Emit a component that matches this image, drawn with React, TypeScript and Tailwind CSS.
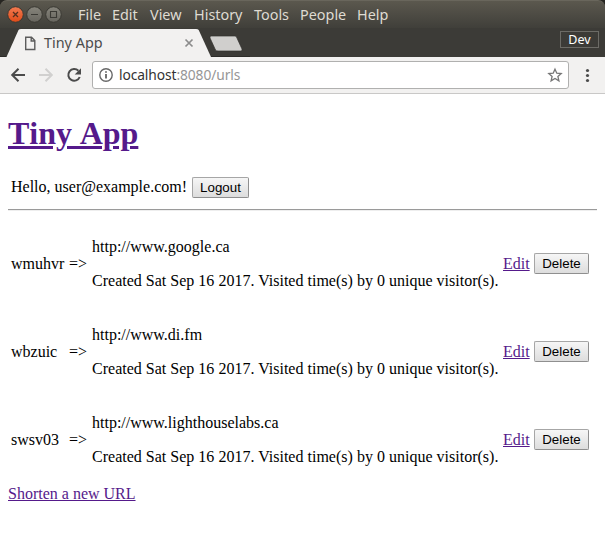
const menu = [
  { label: 'File', cls: 'w-[34px]' },
  { label: 'Edit', cls: 'w-[38px]' },
  { label: 'View', cls: 'w-[44px]' },
  { label: 'History', cls: 'w-[60px]' },
  { label: 'Tools', cls: 'w-[46px]' },
  { label: 'People', cls: 'w-[57px]' },
  { label: 'Help', cls: 'w-[40px]' },
];

const urls = [
  { id: 'wmuhvr', url: 'http://www.google.ca' },
  { id: 'wbzuic', url: 'http://www.di.fm' },
  { id: 'swsv03', url: 'http://www.lighthouselabs.ca' },
];

function WindowButtons() {
  return (
    <svg width="70" height="28" viewBox="0 0 70 28" fill="none" className="shrink-0">
      <defs>
        <linearGradient id="close" x1="0" y1="0" x2="0" y2="1">
          <stop stopColor="#f37b51" />
          <stop offset="1" stopColor="#df4b18" />
        </linearGradient>
        <linearGradient id="grey" x1="0" y1="0" x2="0" y2="1">
          <stop stopColor="#87857c" />
          <stop offset="1" stopColor="#67655e" />
        </linearGradient>
      </defs>
      <circle cx="15.5" cy="13.5" r="7.8" fill="url(#close)" stroke="#393832" />
      <circle cx="34.5" cy="13.5" r="7.8" fill="url(#grey)" stroke="#393832" />
      <circle cx="53.5" cy="13.5" r="7.8" fill="url(#grey)" stroke="#393832" />
      <path d="M13 11l5 5M18 11l-5 5" stroke="#54301f" strokeWidth="1.3" />
      <path d="M31 13.5h7M50.5 10.5h6v6h-6z" stroke="#3b3a35" strokeWidth="1.1" />
    </svg>
  );
}

function PushButton({ label, cls }: { label: string; cls: string }) {
  return (
    <button
      className={`h-[21px] shrink-0 rounded-[2px] border border-[#a6a6a6] border-r-[#8f8f8f] border-b-[#8f8f8f] bg-linear-to-b from-[#f6f6f6] to-[#dddddd] text-center font-['Liberation_Sans',sans-serif] text-[13.333px] leading-[19px] text-black ${cls}`}
    >
      {label}
    </button>
  );
}

export default function App() {
  return (
    <div className="h-[549px] w-[605px] overflow-hidden bg-white">
      <div className="bg-[#262521]">
        <header className="flex h-7 items-start rounded-t-[7px] border-t border-[#69665c] bg-linear-to-b from-[#5b584e] to-[#403f3a]">
          <WindowButtons />
          <nav className="flex pl-2 font-['Noto_Sans',sans-serif] text-[14.400px] leading-[28px] text-[#dfdbd2]">
            {menu.map((m) => (
              <span key={m.label} className={m.cls}>{m.label}</span>
            ))}
          </nav>
        </header>
      </div>

      <div className="relative flex h-[29px] bg-[#3c3b37]">
        <svg width="250" height="30" viewBox="0 0 250 30" className="absolute top-0 left-0">
          <path d="M0 28.5h250" stroke="#2d2c29" />
          <path d="M6.5 29L18.5 2Q19.300 1 21 1H196Q198 1 198.700 2L211 29v1H6.500z" fill="#f2f1f0" />
          <path d="M211 8h24q1 0 1.500 1l5.500 12q.5 2-1 2h-23q-2 0-2.500-1l-5.500-12q-.5-2 1-2z" fill="#d0cfcd" stroke="#32312e" strokeWidth=".7" />
          <path d="M25.700 9.200h5.800l3.300 3.300v9h-9.100zM31.200 9.500v3.500h3.500" fill="none" stroke="#5c5c5c" strokeWidth="1.400" />
          <path d="M185.500 11.500l7 7M192.500 11.500l-7 7" stroke="#8c8c8c" strokeWidth="1.700" />
        </svg>
        <div className="relative ml-11 font-['Noto_Sans',sans-serif] text-[14.400px] leading-[30px] text-[#4c4c4c]">Tiny App</div>
        <div className="mt-[3px] mr-[6px] ml-auto h-[17px] w-[39px] border border-[#6c6b66] text-center font-['Noto_Sans',sans-serif] text-[12.500px] leading-[16px] text-white">Dev</div>
      </div>

      <div className="flex h-[37px] items-start border-b border-[#c9c8c7] bg-[#f2f1f0]">
        <svg width="92" height="36" viewBox="0 0 92 36" fill="none" strokeWidth="2" className="shrink-0">
          <path d="M25 18H12.500M18.500 11.700L12.200 18l6.300 6.300" stroke="#4b4b4b" />
          <path d="M39 18h12.500M45.500 11.700l6.300 6.300-6.300 6.300" stroke="#d1d0cf" />
          <path d="M78.400 13.700A5.900 5.900 0 1 0 79.700 20" stroke="#4b4b4b" />
          <path d="M81 11.200v6.300h-6.300z" fill="#4b4b4b" />
        </svg>
        <div className="mt-1 flex h-7 w-[477px] shrink-0 rounded-[3px] border border-[#b0b0af] bg-white">
          <svg width="26" height="26" viewBox="0 0 26 26" fill="none" className="shrink-0">
            <circle cx="13" cy="13" r="6.200" stroke="#686868" strokeWidth="1.400" />
            <path d="M13 12v4.500M13 9.200v1.600" stroke="#5a5a5a" strokeWidth="1.700" />
          </svg>
          <span className="font-['Noto_Sans',sans-serif] text-[13.800px] leading-[26px] tracking-[-0.100px] text-[#333]">
            localhost<span className="text-[#969696]">:8080/urls</span>
          </span>
          <svg width="26" height="26" viewBox="0 0 26 26" fill="none" className="ml-auto shrink-0">
            <path d="M13 7.200l1.800 4 4.400.4-3.300 2.900 1 4.300-3.900-2.300-3.900 2.300 1-4.300-3.300-2.900 4.400-.4z" stroke="#767676" strokeWidth="1.300" />
          </svg>
        </div>
        <svg width="36" height="36" viewBox="0 0 36 36" fill="#4b4b4b" className="shrink-0">
          <circle cx="18.500" cy="13.500" r="1.600" />
          <circle cx="18.500" cy="18.500" r="1.600" />
          <circle cx="18.500" cy="23.500" r="1.600" />
        </svg>
      </div>

      <main className="px-2 font-['Liberation_Serif',serif] text-[16px] leading-[18px] text-black">
        <h1 className="pt-[21px] text-[32px] leading-[37px] font-bold tracking-[-0.050px] text-[#551a8b] [font-kerning:none]">
          <a className="underline">Tiny App</a>
        </h1>
        <div className="mt-[25px] flex pl-[3px]">
          <span className="mt-px w-[181px] whitespace-nowrap">Hello, user@example.com!</span>
          <PushButton label="Logout" cls="w-[57px]" />
        </div>
        <hr className="mt-[11px] h-[2px] border-t border-b border-t-[#9a9a9a] border-b-[#eeeeee]" />
        <div className="mt-[9px] mb-px pl-[3px]">
          {urls.map((u) => (
            <div key={u.id} className="grid h-[88px] grid-cols-[58px_23px_411px_31px_55px] items-center whitespace-nowrap">
              <span>{u.id}</span>
              <span>=&gt;</span>
              <div className="flex flex-col gap-4">
                <p>{u.url}</p>
                <p className="tracking-[0.010px]">Created Sat Sep 16 2017. Visited time(s) by 0 unique visitor(s).</p>
              </div>
              <a className="text-[#551a8b] underline">Edit</a>
              <PushButton label="Delete" cls="mb-px w-[55px]" />
            </div>
          ))}
        </div>
        <a className="block text-[#551a8b] underline">Shorten a new URL</a>
      </main>
    </div>
  );
}
